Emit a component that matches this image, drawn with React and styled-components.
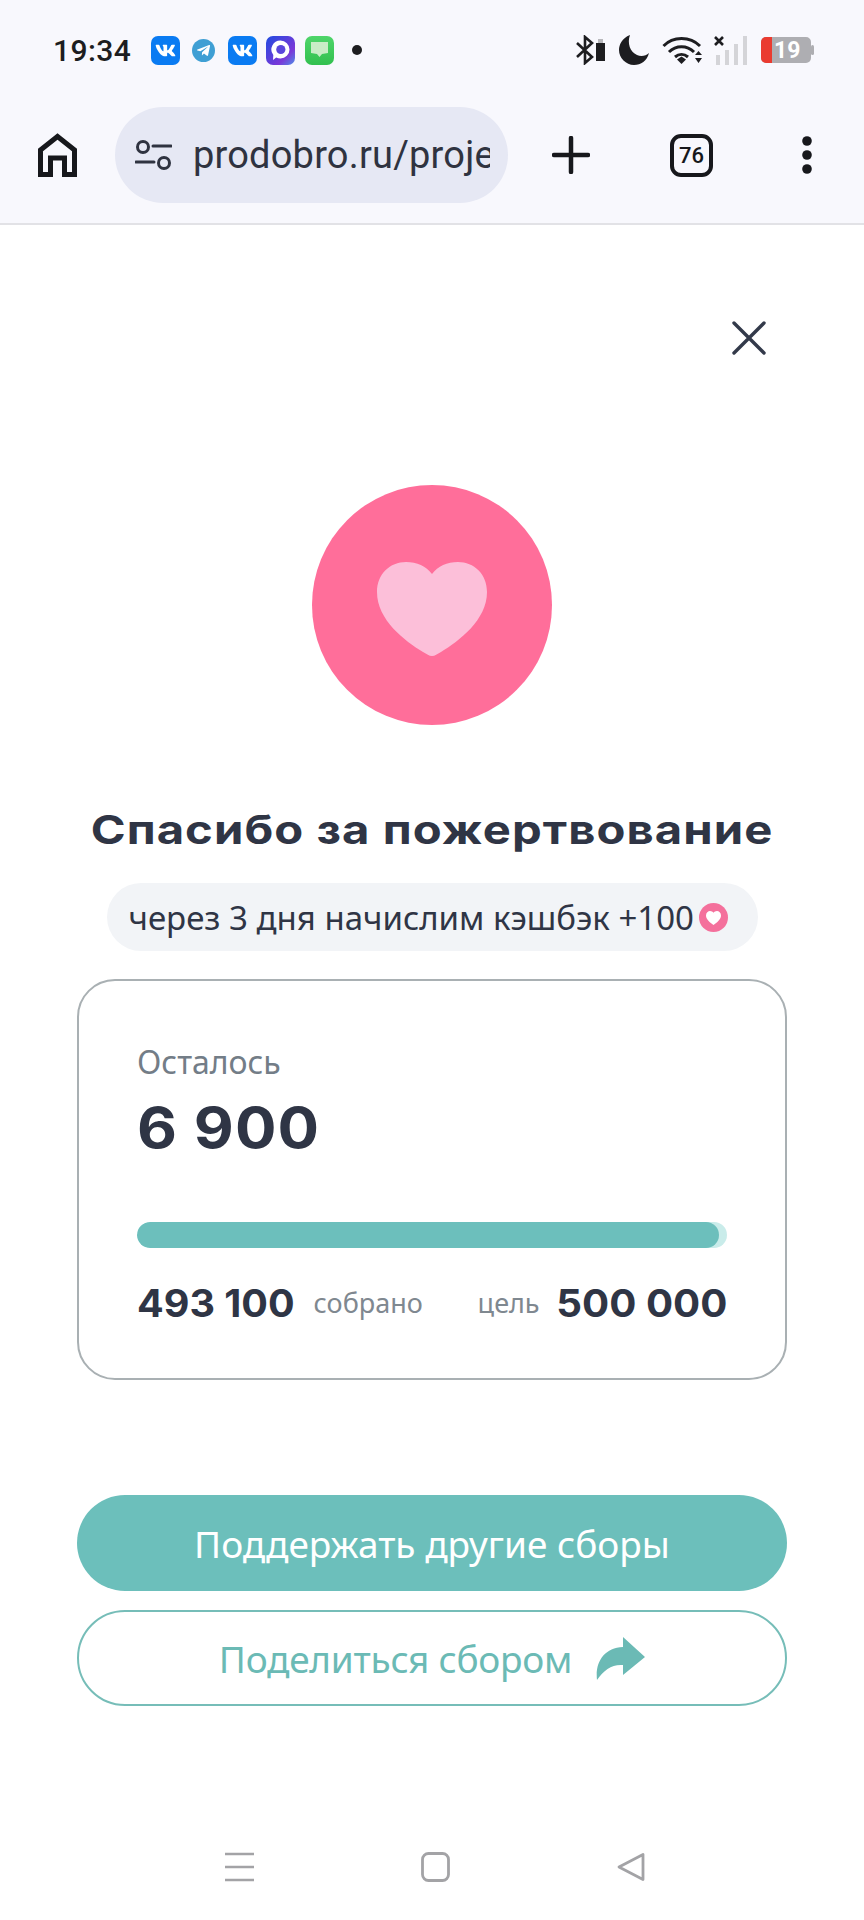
import React from 'react';
import styled, { createGlobalStyle } from 'styled-components';
import { FaVk, FaTelegramPlane } from 'react-icons/fa';

const Global = createGlobalStyle`
html, body {
  margin: 0;
  padding: 0;
  background: #fff;
}
* { box-sizing: border-box; }
`

const Page = styled.div`
width: 864px;
height: 1920px;
display: flex;
flex-direction: column;
font-family: "Noto Sans", sans-serif;
overflow: hidden;
`

const Header = styled.header`
background: #f8f8fd;
border-bottom: 2px solid #e2e2e6;
height: 225px;
flex-shrink: 0;
`

const StatusBar = styled.div`
height: 100px;
padding: 0 50px 0 53px;
display: flex;
align-items: center;
justify-content: space-between;
`

const StatusLeft = styled.div`
display: flex;
align-items: center;
`

const StatusRight = styled.div`
display: flex;
align-items: center;
`

const Time = styled.span`
font-family: Roboto, sans-serif;
font-size: 30px;
font-weight: 500;
letter-spacing: 0.4px;
color: #1d1d20;
width: 98px;
`

const AppIcon = styled.span`
width: 29px;
height: 29px;
border-radius: 7px;
background: ${(p) => p.$bg};
display: flex;
align-items: center;
justify-content: center;
margin-right: ${(p) => p.$gap}px;
color: #fff;
flex-shrink: 0;
`

const TgIcon = styled(AppIcon)`
width: 23px;
height: 23px;
border-radius: 50%;
margin-left: 1px;
`

const NoticeDot = styled.span`
width: 10px;
height: 10px;
border-radius: 50%;
background: #1d1d20;
margin-left: 18px;
`

const StatusGlyph = styled.svg`
margin-left: ${(p) => p.$left}px;
`

const Toolbar = styled.div`
height: 96px;
margin-top: 7px;
display: flex;
align-items: center;
padding-left: 38px;
`

const UrlPill = styled.div`
width: 393px;
height: 96px;
margin-left: 38px;
border-radius: 48px;
background: #e6e8f4;
display: flex;
align-items: center;
padding: 0 18px 0 20px;
gap: 21px;
flex-shrink: 0;
`

const UrlText = styled.div`
font-family: Roboto, sans-serif;
font-size: 38px;
color: #2f3340;
white-space: nowrap;
overflow: hidden;
flex: 1;
letter-spacing: 0.2px;
`

const ToolSlot = styled.div`
margin-left: ${(p) => p.$left}px;
display: flex;
align-items: center;
justify-content: center;
flex-shrink: 0;
`

const TabCount = styled.div`
width: 43px;
height: 43px;
border: 4.5px solid #17181c;
border-radius: 11px;
font-family: Roboto, sans-serif;
font-size: 22px;
font-weight: 500;
color: #17181c;
display: flex;
align-items: center;
justify-content: center;
`

const Main = styled.main`
flex: 1;
display: flex;
flex-direction: column;
padding: 0 77px;
`

const CloseRow = styled.div`
display: flex;
justify-content: flex-end;
padding: 96px 21px 0 0;
height: 130px;
`

const Hero = styled.div`
width: 240px;
height: 240px;
border-radius: 50%;
background: #ff6e9a;
margin: 130px auto 0;
padding-top: 7px;
display: flex;
align-items: center;
justify-content: center;
`

const Title = styled.h1`
margin: 80px -20px 0;
font-family: Inter, sans-serif;
font-size: 40px;
line-height: 50px;
font-weight: 700;
color: #2f3545;
text-align: center;
letter-spacing: 0.9px;
white-space: nowrap;
transform: scaleX(1.18);
`

const Cashback = styled.div`
width: 651px;
height: 68px;
margin: 28px auto 0;
border-radius: 34px;
background: #f2f4f7;
display: flex;
align-items: center;
padding-left: 22px;
font-size: 33px;
color: #2f3545;
white-space: nowrap;
`

const CoinHeart = styled.span`
margin-left: 5px;
display: flex;
`

const Card = styled.section`
margin-top: 28px;
height: 401px;
border: 2px solid #a9b0b3;
border-radius: 38px;
padding: 61px 58px 0;
`

const MutedLabel = styled.div`
font-size: 32px;
line-height: 40px;
color: #737d87;
`

const Amount = styled.div`
margin-top: 14px;
font-family: Inter, sans-serif;
font-size: 56px;
line-height: 64px;
font-weight: 700;
color: #2f3545;
letter-spacing: 1px;
transform: scaleX(1.1);
transform-origin: left center;
`

const Track = styled.div`
margin-top: 62px;
height: 26px;
border-radius: 13px;
background: #c9ecea;
overflow: hidden;
`

const Fill = styled.div`
height: 100%;
background: #6cbfbc;
border-radius: 13px;
`

const Totals = styled.div`
margin-top: 32px;
display: flex;
align-items: center;
justify-content: space-between;
`

const TotalGroup = styled.div`
display: flex;
align-items: center;
gap: ${(p) => p.$gap}px;
`

const TotalValue = styled.span`
font-family: Inter, sans-serif;
font-size: 38px;
line-height: 46px;
font-weight: 700;
color: #2f3545;
transform: scaleX(${(p) => p.$scale});
transform-origin: ${(p) => p.$origin} center;
`

const TotalLabel = styled.span`
font-size: 27px;
line-height: 46px;
color: #7f8890;
`

const Actions = styled.div`
margin-top: 115px;
display: flex;
flex-direction: column;
gap: 19px;
`

const Button = styled.button`
height: 96px;
border-radius: 48px;
font-family: "Noto Sans", sans-serif;
font-size: 37px;
letter-spacing: ${(p) => (p.$outline ? '-0.25px' : '0')};
display: flex;
align-items: center;
justify-content: center;
gap: 24px;
padding: 0;
background: ${(p) => (p.$outline ? '#fff' : '#6cbfbb')};
color: ${(p) => (p.$outline ? '#6bbab5' : '#fff')};
border: ${(p) => (p.$outline ? '2px solid #76bdb8' : 'none')};
`

const NavBar = styled.nav`
height: 67px;
margin-bottom: 20px;
display: flex;
align-items: center;
padding-left: 225px;
flex-shrink: 0;
`

const NavSlot = styled.div`
margin-right: ${(p) => p.$gap}px;
display: flex;
`

const collected = 493100
const goal = 500000

const App = () => {
    return (
        <Page>
            <Global />
            <Header>
                <StatusBar>
                    <StatusLeft>
                        <Time>19:34</Time>
                        <AppIcon $bg="#0a7bf2" $gap={11}><FaVk size={21} /></AppIcon>
                        <TgIcon $bg="#3f9fd4" $gap={13}><FaTelegramPlane size={15} /></TgIcon>
                        <AppIcon $bg="#0a7bf2" $gap={9}><FaVk size={21} /></AppIcon>
                        <AppIcon $bg="linear-gradient(135deg, #1f4be0, #7a38d8 70%, #4f8fe8)" $gap={10}>
                            <svg width="21" height="23" viewBox="0 0 21 23">
                                <path d="M10.5 1.5a9 9 0 0 1 0 18c-1.6 0-3-.4-4.3-1L3 21l.3-5A9 9 0 0 1 10.5 1.5z" fill="#fff" />
                                <circle cx="10.8" cy="10.5" r="4.6" fill="#5a46dc" />
                            </svg>
                        </AppIcon>
                        <AppIcon $bg="linear-gradient(180deg, #4fd56a, #32c04f)" $gap={0}>
                            <svg width="19" height="18" viewBox="0 0 19 18">
                                <path d="M1 1h17v11l-6 1-2.500 3L7 13l-6-1z" fill="#c9ecc6" />
                            </svg>
                        </AppIcon>
                        <NoticeDot />
                    </StatusLeft>
                    <StatusRight>
                        <svg width="31" height="30" viewBox="0 0 31 30">
                            <path d="M2 8l15 14-7 6V2l7 6L2 22" fill="none" stroke="#1d1d20" strokeWidth="2.6" />
                            <path d="M21 8h9v18h-9z" fill="#1d1d20" />
                            <rect x="23" y="4" width="5" height="4" fill="#b8b8bc" />
                        </svg>
                        <StatusGlyph $left={13} width="30" height="30" viewBox="0 0 30 30">
                            <path d="M11 0C3 3 0 10 0 15c0 8 7 15 15 15 7 0 13-4 15-12-3 3-8 4-12 2C11 17 8 8 11 0z" fill="#1d1d20" />
                        </StatusGlyph>
                        <StatusGlyph $left={13} width="41" height="30" viewBox="0 0 41 30">
                            <g fill="none" stroke="#1d1d20" strokeWidth="3">
                                <path d="M1.5 11C11 1 28 1 38 11" />
                                <path d="M7 17c7-7 18-7 25 0" />
                                <path d="M13 22c4-3.500 9-3.500 13 0" />
                            </g>
                            <path d="M15 24.500l4.500-3 4.500 3-4.500 4.500z" fill="#1d1d20" />
                            <path d="M33 20h7l-3.500-4zM33 23h7l-3.500 5z" fill="#1d1d20" />
                        </StatusGlyph>
                        <StatusGlyph $left={11} width="34" height="30" viewBox="0 0 34 30">
                            <path d="M1 2l8 8M9 2l-8 8" stroke="#1d1d20" strokeWidth="2.6" />
                            <rect x="2" y="20" width="4" height="10" fill="#d4d4d8" />
                            <rect x="11" y="15" width="4" height="15" fill="#d4d4d8" />
                            <rect x="20" y="9" width="4" height="21" fill="#d4d4d8" />
                            <rect x="29" y="1" width="4" height="29" fill="#d4d4d8" />
                        </StatusGlyph>
                        <StatusGlyph $left={13} width="53" height="28" viewBox="0 0 53 28">
                            <rect x="0" y="1" width="50" height="26" rx="5" fill="#aeaeb2" />
                            <path d="M5 1h6v26H5a5 5 0 0 1-5-5V6a5 5 0 0 1 5-5z" fill="#ea3b30" />
                            <rect x="50" y="9" width="3" height="10" rx="1.500" fill="#aeaeb2" />
                            <text x="13" y="22" fontFamily="Roboto, sans-serif" fontWeight="700" fontSize="23" fill="#fff">19</text>
                        </StatusGlyph>
                    </StatusRight>
                </StatusBar>
                <Toolbar>
                    <svg width="39" height="44" viewBox="0 0 39 44">
                        <path d="M2.500 41.500V17L19.500 3.500 36.500 17v24.500H26.500V25h-14v16.500z" fill="none" stroke="#17181c" strokeWidth="5" />
                    </svg>
                    <UrlPill>
                        <svg width="37" height="32" viewBox="0 0 37 32">
                            <circle cx="8" cy="8" r="5.500" fill="none" stroke="#2f3340" strokeWidth="3" />
                            <path d="M18 7h18M1 23h18" stroke="#2f3340" strokeWidth="3" strokeLinecap="round" />
                            <circle cx="29" cy="24" r="5.500" fill="none" stroke="#2f3340" strokeWidth="3" />
                        </svg>
                        <UrlText>prodobro.ru/project</UrlText>
                    </UrlPill>
                    <ToolSlot $left={44}>
                        <svg width="38" height="38" viewBox="0 0 38 38">
                            <path d="M19 2v34M2 19h34" stroke="#17181c" strokeWidth="4.500" strokeLinecap="round" />
                        </svg>
                    </ToolSlot>
                    <ToolSlot $left={80}>
                        <TabCount>76</TabCount>
                    </ToolSlot>
                    <ToolSlot $left={89}>
                        <svg width="10" height="38" viewBox="0 0 10 38">
                            <circle cx="5" cy="5" r="4.800" fill="#17181c" />
                            <circle cx="5" cy="19" r="4.800" fill="#17181c" />
                            <circle cx="5" cy="33" r="4.800" fill="#17181c" />
                        </svg>
                    </ToolSlot>
                </Toolbar>
            </Header>

            <Main>
                <CloseRow>
                    <svg width="34" height="34" viewBox="0 0 34 34">
                        <path d="M2 2l30 30M32 2L2 32" stroke="#333a4a" strokeWidth="3.400" strokeLinecap="round" />
                    </svg>
                </CloseRow>
                <Hero>
                    <svg width="110" height="94" viewBox="0 0 110 94">
                        <path d="M55 94c-3 0-5-2-9-4C28 79 0 58 0 30 0 12 13 0 29 0c11 0 20 4 26 12C61 4 70 0 81 0c16 0 29 12 29 30 0 28-28 49-46 60-4 2-6 4-9 4z" fill="#fcbfd9" />
                    </svg>
                </Hero>
                <Title>Спасибо за пожертвование</Title>
                <Cashback>
                    через 3 дня начислим кэшбэк +100
                    <CoinHeart>
                        <svg width="29" height="29" viewBox="0 0 29 29">
                            <circle cx="14.500" cy="14.500" r="14.500" fill="#f4709c" />
                            <path d="M14.500 22C11 19.500 7 16.500 7 12.500 7 9.500 9.200 8 11 8c1.500 0 2.700.7 3.500 1.800C15.300 8.700 16.500 8 18 8c1.800 0 4 1.500 4 4.500 0 4-4 7-7.500 9.500z" fill="#fff" />
                        </svg>
                    </CoinHeart>
                </Cashback>
                <Card>
                    <MutedLabel>Осталось</MutedLabel>
                    <Amount>6 900</Amount>
                    <Track>
                        <Fill style={{ width: `${(collected / goal) * 100}%` }} />
                    </Track>
                    <Totals>
                        <TotalGroup $gap={25}>
                            <TotalValue $scale={1.04} $origin="left">493 100</TotalValue>
                            <TotalLabel>собрано</TotalLabel>
                        </TotalGroup>
                        <TotalGroup $gap={26}>
                            <TotalLabel>цель</TotalLabel>
                            <TotalValue $scale={1.06} $origin="right">500 000</TotalValue>
                        </TotalGroup>
                    </Totals>
                </Card>
                <Actions>
                    <Button>Поддержать другие сборы</Button>
                    <Button $outline>
                        Поделиться сбором
                        <svg width="49" height="43" viewBox="0 0 49 43">
                            <path d="M1 43C-1 25 8 11 27 10V0l22 20-22 18V28C16 27 8 33 1 43z" fill="#6bbab5" />
                        </svg>
                    </Button>
                </Actions>
            </Main>

            <NavBar>
                <NavSlot $gap={167}>
                    <svg width="29" height="30" viewBox="0 0 29 30">
                        <path d="M0 2h29M0 15h29M0 28h29" stroke="#a3a3a6" strokeWidth="2.600" />
                    </svg>
                </NavSlot>
                <NavSlot $gap={167}>
                    <svg width="29" height="30" viewBox="0 0 29 30">
                        <rect x="1.500" y="1.500" width="26" height="27" rx="6" fill="none" stroke="#a3a3a6" strokeWidth="2.800" />
                    </svg>
                </NavSlot>
                <NavSlot $gap={0}>
                    <svg width="29" height="30" viewBox="0 0 29 30">
                        <path d="M26 2.500v25L2 15z" fill="none" stroke="#a3a3a6" strokeWidth="2.800" strokeLinejoin="round" />
                    </svg>
                </NavSlot>
            </NavBar>
        </Page>
    )
}

export default App;
